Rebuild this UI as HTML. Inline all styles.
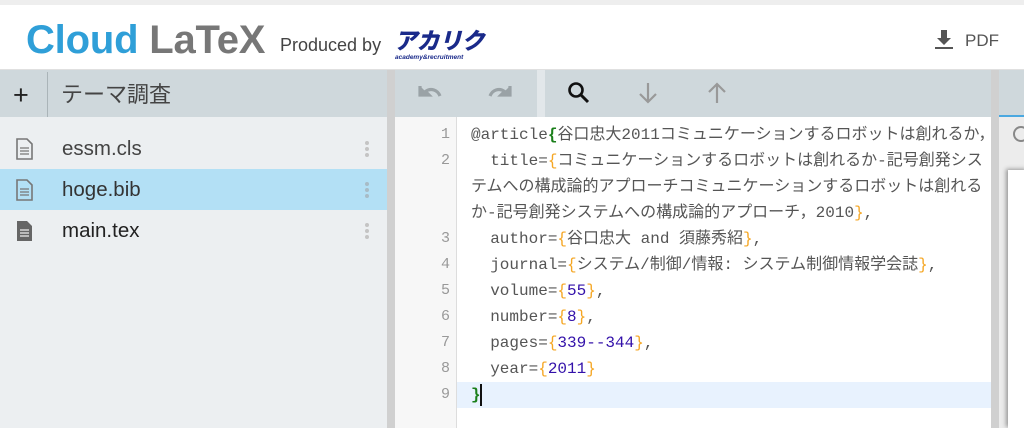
<!DOCTYPE html>
<html><head><meta charset="utf-8"><style>
*{margin:0;padding:0;box-sizing:border-box}
body{width:1024px;height:428px;overflow:hidden;background:#fff;font-family:"Liberation Sans","Noto Sans CJK JP",sans-serif;position:relative}
.abs{position:absolute}
.code{font-family:"Liberation Mono","Noto Sans CJK JP",monospace;font-size:16px;color:#555;white-space:pre;line-height:26px}
.b{color:#f5a623}.n{color:#3311aa}.g{color:#1a7f1a;font-weight:bold}
.ln{font-family:"Liberation Mono",monospace;font-size:15px;color:#999;width:55px;text-align:right;line-height:26px}
</style></head><body>
<div class="abs" style="left:0;top:0;width:1024px;height:5px;background:#eeeeee"></div>
<div class="abs" style="left:26px;top:17px;font-size:40px;font-weight:bold;color:#2f9fd8;letter-spacing:-0.2px;line-height:46px">Cloud <span style="color:#777">LaTeX</span></div>
<div class="abs" style="left:280px;top:35px;font-size:18px;color:#444">Produced by</div>
<div class="abs" style="left:394px;top:28px;font-size:23px;font-weight:900;color:#1a2a8a;font-style:italic;letter-spacing:-0.5px;line-height:26px">アカリク</div>
<div class="abs" style="left:395px;top:54px;font-size:6.5px;color:#1a2a8a;font-style:italic;font-weight:bold">academy&amp;recruitment</div>
<svg class="abs" style="left:933px;top:28px" width="22" height="22" viewBox="0 0 22 22"><path d="M8 2h6v8h4l-7 7-7-7h4z" fill="#555"/><rect x="2" y="19" width="18" height="2" fill="#555"/></svg>
<div class="abs" style="left:965px;top:31px;font-size:17px;color:#555">PDF</div>
<div class="abs" style="left:0;top:69px;width:1024px;height:1px;background:#e0e0e0"></div>
<!-- sidebar -->
<div class="abs" style="left:0;top:70px;width:387px;height:47px;background:#cfd8dc"></div>
<div class="abs" style="left:47px;top:72px;width:1px;height:45px;background:#aab4b8"></div>
<div class="abs" style="left:13px;top:80px;font-size:27px;color:#222">+</div>
<div class="abs" style="left:61px;top:80px;font-size:22px;color:#444;line-height:30px">テーマ調査</div>
<div class="abs" style="left:0;top:117px;width:387px;height:311px;background:#eceff1"></div>
<div class="abs" style="left:0;top:169px;width:387px;height:41px;background:#b3e0f5"></div>
<div class="abs" style="left:387px;top:70px;width:8px;height:358px;background:#d0d0d0"></div>
<svg class="abs" style="left:15px;top:138px" width="20" height="22" viewBox="0 0 20 22"><path d="M2 1h10l5 5v15H2z" fill="none" stroke="#777" stroke-width="1.6"/><path d="M5 10h9M5 13h9M5 16h9" stroke="#777" stroke-width="1.3"/></svg>
<svg class="abs" style="left:15px;top:179px" width="20" height="22" viewBox="0 0 20 22"><path d="M2 1h10l5 5v15H2z" fill="none" stroke="#777" stroke-width="1.6"/><path d="M5 10h9M5 13h9M5 16h9" stroke="#777" stroke-width="1.3"/></svg>
<svg class="abs" style="left:15px;top:220px" width="20" height="22" viewBox="0 0 20 22"><path d="M2 1h10l5 5v15H2z" fill="#666"/><path d="M5 10h9M5 13h9M5 16h9" stroke="#eee" stroke-width="1.3"/></svg>
<div class="abs" style="left:62px;top:137px;font-size:20.5px;color:#444">essm.cls</div>
<div class="abs" style="left:62px;top:178px;font-size:20.5px;color:#333">hoge.bib</div>
<div class="abs" style="left:62px;top:219px;font-size:20.5px;color:#222">main.tex</div>
<div class="abs" style="left:365px;top:141px;width:4px;font-size:0"><div style="width:4px;height:4px;border-radius:2px;background:#c4c4c4;margin-bottom:2px"></div><div style="width:4px;height:4px;border-radius:2px;background:#c4c4c4;margin-bottom:2px"></div><div style="width:4px;height:4px;border-radius:2px;background:#c4c4c4"></div></div>
<div class="abs" style="left:365px;top:182px;width:4px;font-size:0"><div style="width:4px;height:4px;border-radius:2px;background:#a8bcc6;margin-bottom:2px"></div><div style="width:4px;height:4px;border-radius:2px;background:#a8bcc6;margin-bottom:2px"></div><div style="width:4px;height:4px;border-radius:2px;background:#a8bcc6"></div></div>
<div class="abs" style="left:365px;top:223px;width:4px;font-size:0"><div style="width:4px;height:4px;border-radius:2px;background:#c4c4c4;margin-bottom:2px"></div><div style="width:4px;height:4px;border-radius:2px;background:#c4c4c4;margin-bottom:2px"></div><div style="width:4px;height:4px;border-radius:2px;background:#c4c4c4"></div></div>
<!-- editor toolbar -->
<div class="abs" style="left:395px;top:70px;width:596px;height:47px;background:#cfd8dc"></div>
<div class="abs" style="left:537px;top:70px;width:8px;height:47px;background:#e2e7ea"></div>
<svg class="abs" style="left:416px;top:82px" width="28" height="20" viewBox="0 0 28 20"><path d="M4 4v9h9l-3.5-3.5C12 7.5 15 7 18 8c3 1 5 3.5 6 6" fill="none" stroke="#9aa2a6" stroke-width="3.2"/><path d="M4 4v9h9z" fill="#9aa2a6"/></svg>
<svg class="abs" style="left:486px;top:82px" width="28" height="20" viewBox="0 0 28 20"><path d="M24 4v9h-9l3.5-3.5C16 7.5 13 7 10 8c-3 1-5 3.5-6 6" fill="none" stroke="#9aa2a6" stroke-width="3.2"/><path d="M24 4v9h-9z" fill="#9aa2a6"/></svg>
<svg class="abs" style="left:566px;top:80px" width="26" height="26" viewBox="0 0 26 26"><circle cx="10" cy="10" r="6.5" fill="none" stroke="#111" stroke-width="2.6"/><path d="M15 15l7 7" stroke="#111" stroke-width="3"/></svg>
<svg class="abs" style="left:637px;top:80px" width="22" height="26" viewBox="0 0 22 26"><path d="M11 3v19M3 14l8 8 8-8" fill="none" stroke="#999" stroke-width="2.2"/></svg>
<svg class="abs" style="left:706px;top:80px" width="22" height="26" viewBox="0 0 22 26"><path d="M11 23V4M3 12l8-8 8 8" fill="none" stroke="#999" stroke-width="2.2"/></svg>
<!-- editor -->
<div class="abs" style="left:395px;top:117px;width:62px;height:311px;background:#f7f7f7;border-right:1px solid #ddd"></div>
<div class="abs" style="left:457px;top:382px;width:534px;height:26px;background:#e8f2fe"></div>
<div class="abs ln" style="left:395px;top:122px">1<br>2<br><br><br>3<br>4<br>5<br>6<br>7<br>8<br>9</div>
<div class="abs code" style="left:471px;top:122px">@article<span class="g">{</span>谷口忠大2011コミュニケーションするロボットは創れるか，
  title=<span class="b">{</span>コミュニケーションするロボットは創れるか-記号創発シス
テムへの構成論的アプローチコミュニケーションするロボットは創れる
か-記号創発システムへの構成論的アプローチ，2010<span class="b">}</span>,
  author=<span class="b">{</span>谷口忠大 and 須藤秀紹<span class="b">}</span>,
  journal=<span class="b">{</span>システム/制御/情報: システム制御情報学会誌<span class="b">}</span>,
  volume=<span class="b">{</span><span class="n">55</span><span class="b">}</span>,
  number=<span class="b">{</span><span class="n">8</span><span class="b">}</span>,
  pages=<span class="b">{</span><span class="n">339--344</span><span class="b">}</span>,
  year=<span class="b">{</span><span class="n">2011</span><span class="b">}</span>
<span class="g">}</span></div>
<div class="abs" style="left:480px;top:384px;width:1.5px;height:22px;background:#111"></div>
<!-- right -->
<div class="abs" style="left:991px;top:70px;width:8px;height:358px;background:#d0d0d0"></div>
<div class="abs" style="left:999px;top:70px;width:25px;height:46px;background:#cfd8dc"></div>
<div class="abs" style="left:999px;top:115px;width:25px;height:2px;background:#4aa8e0"></div>
<div class="abs" style="left:999px;top:117px;width:25px;height:311px;background:#ececec"></div>
<div class="abs" style="left:1013px;top:126px;width:16px;height:16px;border:2px solid #888;border-radius:50%"></div>
<div class="abs" style="left:1008px;top:170px;width:20px;height:258px;background:#fff;box-shadow:-2px -1px 4px #999"></div>
</body></html>
